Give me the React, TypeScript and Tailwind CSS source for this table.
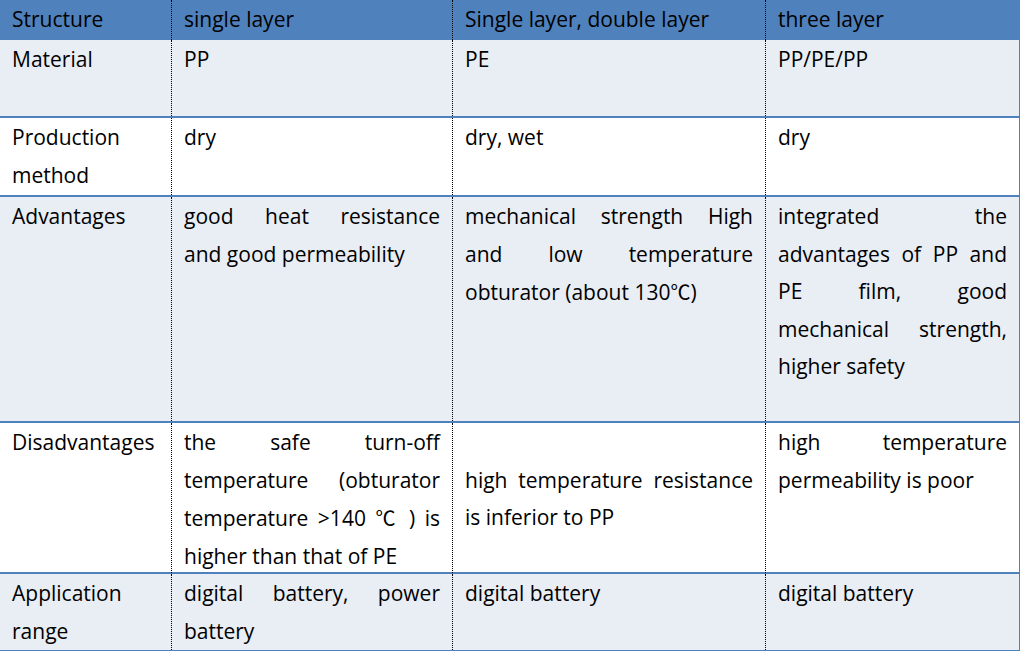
type Line = { text: string; justify?: boolean };
type Cell = Line[];

const j = (text: string): Line => ({ text, justify: true });
const l = (text: string): Line => ({ text });
const blank: Line = { text: "\u00a0" };

type Row = {
  height: string;
  shaded: boolean;
  cells: Cell[];
};

const HEADER = ["Structure", "single layer", "Single layer, double layer", "three layer"];

// heights include the 2px top rule (border-box)
const ROWS: Row[] = [
  {
    height: "h-[76px]",
    shaded: true,
    cells: [[l("Material")], [l("PP")], [l("PE")], [l("PP/PE/PP")]],
  },
  {
    height: "h-[79px]",
    shaded: false,
    cells: [[l("Production"), l("method")], [l("dry")], [l("dry, wet")], [l("dry")]],
  },
  {
    height: "h-[226px]",
    shaded: true,
    cells: [
      [l("Advantages")],
      [j("good heat resistance"), l("and good permeability")],
      [j("mechanical strength High"), j("and low temperature"), l("obturator (about 130℃)")],
      [
        j("integrated the"),
        j("advantages of PP and"),
        j("PE film, good"),
        j("mechanical strength,"),
        l("higher safety"),
      ],
    ],
  },
  {
    height: "h-[151px]",
    shaded: false,
    cells: [
      [l("Disadvantages")],
      [
        j("the safe turn-off"),
        j("temperature (obturator"),
        j("temperature >140 ℃ ) is"),
        l("higher than that of PE"),
      ],
      [blank, j("high temperature resistance"), l("is inferior to PP")],
      [j("high temperature"), l("permeability is poor")],
    ],
  },
  {
    height: "h-[78px]",
    shaded: true,
    cells: [
      [l("Application"), l("range")],
      [j("digital battery, power"), l("battery")],
      [l("digital battery")],
      [l("digital battery")],
    ],
  },
];

const COLS = "grid grid-cols-[171px_281px_313px_254px]";

// the ℃ sign comes from a CJK face, full width like in the source document
function withDegree(text: string) {
  const parts = text.split("℃");
  if (parts.length === 1) return text;
  return (
    <>
      {parts[0]}
      <span className="font-['Noto_Sans_CJK_SC',sans-serif] text-[20px]">℃</span>
      {parts[1]}
    </>
  );
}

function CellBox({ lines, first }: { lines: Cell; first: boolean }) {
  return (
    <div
      className={
        first
          ? "h-full px-3 pt-[1px]"
          : "h-full border-l border-dotted border-black px-3 pt-[1px]"
      }
    >
      {lines.map((ln, i) => (
        <div
          key={i}
          className={
            ln.justify
              ? "text-justify leading-[37.5px] [text-align-last:justify]"
              : "leading-[37.5px]"
          }
        >
          {withDegree(ln.text)}
        </div>
      ))}
    </div>
  );
}

export default function App() {
  return (
    <div className="h-[652px] w-[1021px] bg-white font-['Open_Sans','Noto_Sans_CJK_SC',sans-serif] text-[21px] text-black">
      <div className="w-[1020px] border-r border-b border-[#4f81bd]">
        <div className={`${COLS} h-[40px] bg-[#4f81bd]`}>
          {HEADER.map((h, i) => (
            <CellBox key={h} lines={[l(h)]} first={i === 0} />
          ))}
        </div>
        {ROWS.map((row, r) => (
          <div
            key={r}
            className={`${COLS} ${row.height} ${r === 0 ? "" : "border-t-2 border-[#4f81bd]"} ${
              row.shaded ? "bg-[#e9edf4]" : "bg-white"
            }`}
          >
            {row.cells.map((c, i) => (
              <CellBox key={i} lines={c} first={i === 0} />
            ))}
          </div>
        ))}
      </div>
    </div>
  );
}
